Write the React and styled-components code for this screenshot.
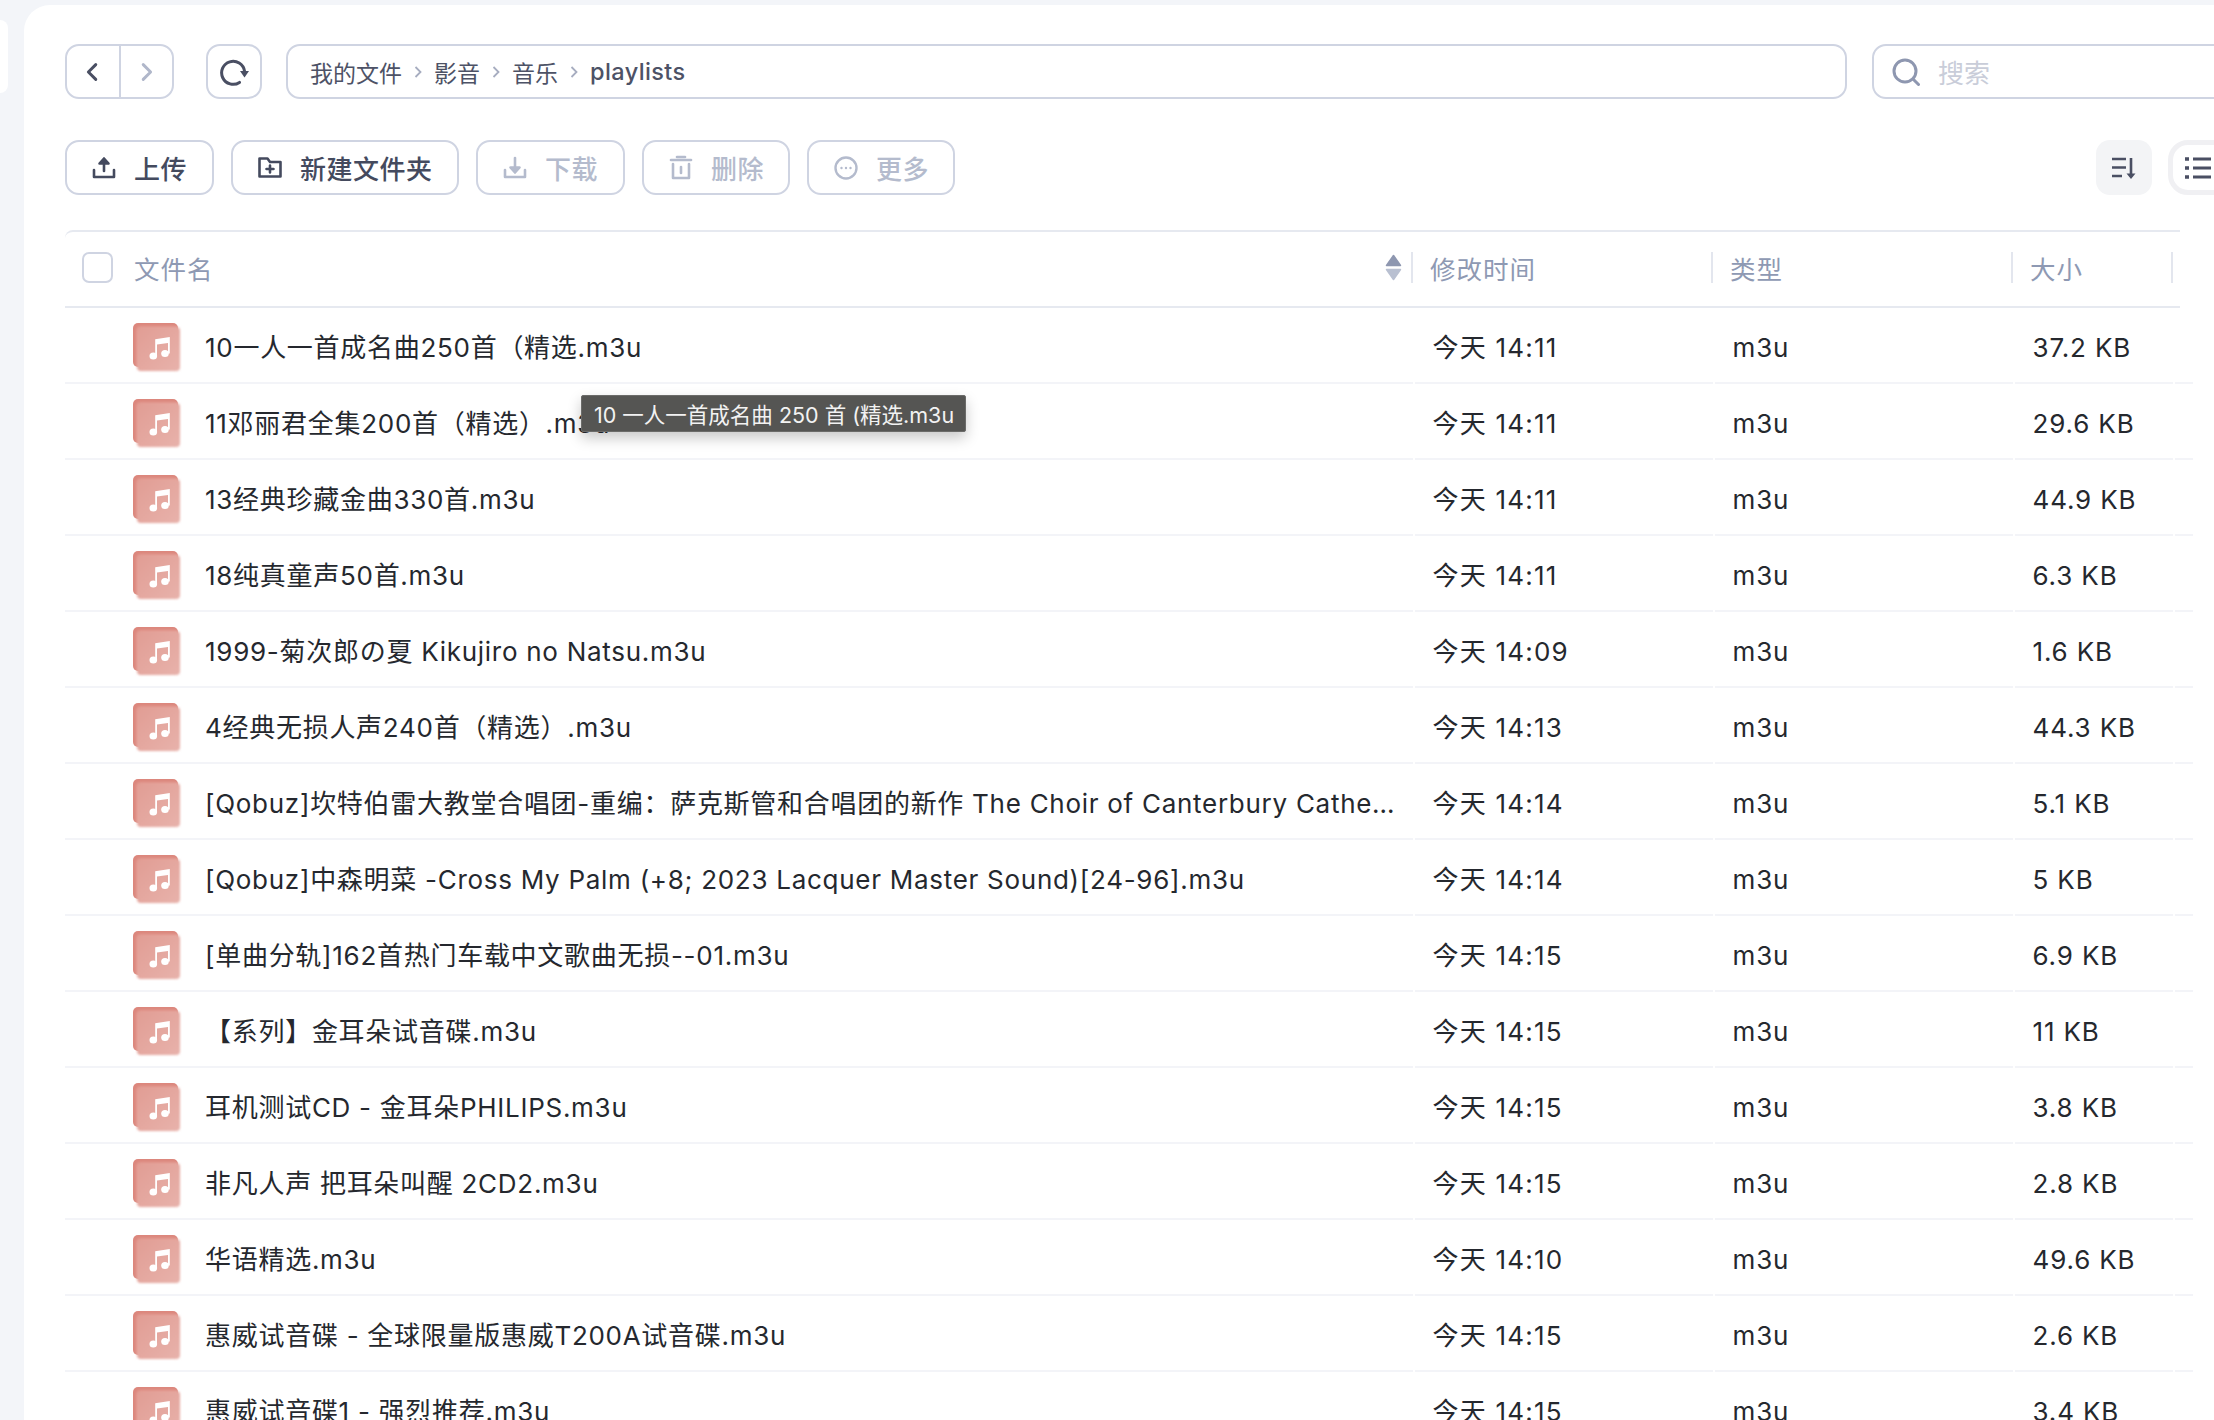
import React from "react";
import styled, { createGlobalStyle } from "styled-components";

const Global = createGlobalStyle`
  html, body { margin: 0; padding: 0; height: 100%; overflow: hidden; background: #f3f5f9; }
  body { font-family: Inter, "Noto Sans CJK SC", sans-serif; color: #25282e; }
  * { box-sizing: border-box; }
`;

const Page = styled.div`
  display: flex;
  align-items: flex-start;
  width: 2214px;
  height: 1420px;
  overflow: hidden;
`;
const SideStub = styled.div`
  flex: none;
  width: 8px;
  height: 73px;
  margin-top: 20px;
  background: #fff;
  border-radius: 0 10px 10px 0;
`;
const Panel = styled.main`
  flex: none;
  width: 2400px;
  height: 1415px;
  margin: 5px 0 0 16px;
  padding: 39px 0 0 41px;
  background: #fff;
  border-radius: 26px 0 0 0;
  overflow: hidden;
`;
const TopBar = styled.div`
  display: flex;
  align-items: stretch;
  height: 55px;
`;
const NavGroup = styled.div`
  display: flex;
  width: 109px;
  border: 2px solid #cfd4e2;
  border-radius: 14px;
`;
const NavButton = styled.button`
  flex: 1;
  display: flex;
  align-items: center;
  justify-content: center;
  padding: 0;
  background: none;
  border: 0;
  & + & { border-left: 2px solid #cfd4e2; }
  color: ${(p) => (p.$off ? "#b0b7ca" : "#4a4f63")};
`;
const RefreshButton = styled.button`
  width: 56px;
  margin-left: 32px;
  display: flex;
  align-items: center;
  justify-content: center;
  padding: 0;
  background: none;
  border: 2px solid #cfd4e2;
  border-radius: 14px;
  color: #4a4f63;
`;
const Crumbs = styled.nav`
  width: 1561px;
  margin-left: 24px;
  padding-left: 22px;
  display: flex;
  align-items: center;
  gap: 8px;
  border: 2px solid #cfd4e2;
  border-radius: 14px;
  font-size: 23px;
  color: #4d5266;
`;
const CrumbSep = styled.span`
  display: flex;
  color: #a7adc0;
`;
const CrumbCurrent = styled.span`
  font-size: 23.5px;
  font-weight: 500;
  letter-spacing: 0.4px;
`;
const SearchBox = styled.div`
  width: 500px;
  margin-left: 25px;
  padding-left: 18px;
  display: flex;
  align-items: center;
  gap: 18px;
  border: 2px solid #cfd4e2;
  border-radius: 14px;
  color: #8e97b0;
`;
const SearchHint = styled.span`
  font-size: 26px;
  color: #c9cdd9;
`;
const ActionBar = styled.div`
  display: flex;
  align-items: stretch;
  height: 55px;
  margin-top: 41px;
  gap: 17px;
`;
const ActionButton = styled.button`
  width: ${(p) => p.$w}px;
  display: flex;
  align-items: center;
  gap: 17px;
  padding: 0 0 0 24px;
  background: none;
  border: 2px solid #cfd4e2;
  border-radius: 14px;
  font: 500 26px Inter, "Noto Sans CJK SC", sans-serif;
  letter-spacing: 0.5px;
  color: ${(p) => (p.$off ? "#b4bbcd" : "#444a5e")};
`;
const ViewTools = styled.div`
  display: flex;
  gap: 16px;
  margin-left: 1124px;
`;
const SortToggle = styled.button`
  width: 56px;
  display: flex;
  align-items: center;
  justify-content: center;
  padding: 0;
  background: #f3f4f6;
  border: 0;
  border-radius: 14px;
  color: #4a4f63;
`;
const ListToggle = styled.button`
  width: 90px;
  display: flex;
  align-items: center;
  padding: 0 0 0 12px;
  background: #fff;
  border: 5px solid #f0f0f3;
  border-radius: 20px;
  color: #4a4f63;
`;
const Table = styled.section`
  position: relative;
  width: 2115px;
  margin-top: 35px;
  border-top: 2px solid #e6e9f0;
  border-radius: 8px 0 0 0;
`;
const columns = "1348px 298px 298px 158px 5px";
const HeadRow = styled.div`
  display: grid;
  grid-template-columns: ${columns};
  column-gap: 2px;
  height: 76px;
  align-items: start;
  border-bottom: 2px solid #e6e9f0;
`;
const HeadCell = styled.div`
  display: flex;
  align-items: center;
  height: 31px;
  margin-top: 20px;
  padding-left: ${(p) => p.$pad ?? 15}px;
  border-right: 2px solid #e3e6ee;
  font-size: 25.5px;
  letter-spacing: 1px;
  color: #8e99b3;
`;
const Check = styled.span`
  width: 31px;
  height: 31px;
  margin-right: 21px;
  border: 2px solid #cfd4e2;
  border-radius: 7px;
`;
const SortArrows = styled.svg`
  margin-left: auto;
  margin-right: 9px;
`;
const Row = styled.div`
  display: grid;
  grid-template-columns: ${columns};
  column-gap: 2px;
  height: 76px;
`;
const Cell = styled.div`
  display: flex;
  align-items: center;
  padding: 5px 0 0 17.5px;
  border-bottom: 2px solid #f3f4f8;
  font-size: 26px;
  line-height: 36px;
  letter-spacing: ${(p) => p.$ls ?? 0.85}px;
  color: #25282e;
  white-space: nowrap;
`;
const NameCell = styled(Cell)`
  padding-left: 68px;
  gap: 25px;
  min-width: 0;
  letter-spacing: 0.72px;
`;
const NameText = styled.span`
  min-width: 0;
  padding-right: 18px;
  overflow: hidden;
  text-overflow: ellipsis;
`;
const FileIcon = styled.span`
  position: relative;
  flex: none;
  width: 47px;
  height: 48px;
  margin-top: -1px;
`;
const IconBack = styled.span`
  position: absolute;
  left: 0;
  top: 0;
  width: 45px;
  height: 44px;
  background: #dc877d;
  border-radius: 5px;
`;
const IconGlass = styled.span`
  position: absolute;
  left: 4px;
  top: 4px;
  width: 43px;
  height: 44px;
  background: linear-gradient(135deg, #e19d94, #e8b2ab);
  border-radius: 4px;
  box-shadow: 0 0 1.5px rgba(255, 235, 230, 0.9);
  filter: blur(1px);
`;
const IconNote = styled.svg`
  position: absolute;
  left: 16px;
  top: 14px;
`;
const Tooltip = styled.div`
  position: absolute;
  left: 516px;
  top: 163px;
  width: 385px;
  height: 37px;
  display: flex;
  align-items: center;
  padding-left: 12px;
  background: #555553;
  border: 1px solid #6b6b69;
  border-radius: 2px;
  box-shadow: 0 6px 14px rgba(0, 0, 0, 0.22);
  font-size: 21.5px;
  color: #f2f2f2;
  white-space: nowrap;
`;

const Line = ({ size = 24, children, sw = 2.6 }) => (
  <svg width={size} height={size} viewBox="0 0 26 26" fill="none" stroke="currentColor" strokeWidth={sw} strokeLinecap="round" strokeLinejoin="round">
    {children}
  </svg>
);

const rows = [
  ["10一人一首成名曲250首（精选.m3u", "14:11", "37.2 KB"],
  ["11邓丽君全集200首（精选）.m3u", "14:11", "29.6 KB"],
  ["13经典珍藏金曲330首.m3u", "14:11", "44.9 KB"],
  ["18纯真童声50首.m3u", "14:11", "6.3 KB"],
  ["1999-菊次郎の夏 Kikujiro no Natsu.m3u", "14:09", "1.6 KB"],
  ["4经典无损人声240首（精选）.m3u", "14:13", "44.3 KB"],
  ["[Qobuz]坎特伯雷大教堂合唱团-重编：萨克斯管和合唱团的新作 The Choir of Canterbury Cathedral.m3u", "14:14", "5.1 KB"],
  ["[Qobuz]中森明菜 -Cross My Palm (+8; 2023 Lacquer Master Sound)[24-96].m3u", "14:14", "5 KB"],
  ["[单曲分轨]162首热门车载中文歌曲无损--01.m3u", "14:15", "6.9 KB"],
  ["【系列】金耳朵试音碟.m3u", "14:15", "11 KB"],
  ["耳机测试CD - 金耳朵PHILIPS.m3u", "14:15", "3.8 KB"],
  ["非凡人声 把耳朵叫醒 2CD2.m3u", "14:15", "2.8 KB"],
  ["华语精选.m3u", "14:10", "49.6 KB"],
  ["惠威试音碟 - 全球限量版惠威T200A试音碟.m3u", "14:15", "2.6 KB"],
  ["惠威试音碟1 - 强烈推荐.m3u", "14:15", "3.4 KB"],
];

const Chevron = ({ left }) => (
  <Line size={24} sw={3.2}>
    <path d={left ? "M16 5l-8 8 8 8" : "M10 5l8 8-8 8"} />
  </Line>
);
const Sep = () => (
  <CrumbSep>
    <svg width="16" height="16" viewBox="0 0 16 16" fill="none" stroke="currentColor" strokeWidth="1.8">
      <path d="M5.500 3l5 5-5 5" />
    </svg>
  </CrumbSep>
);

export default function App() {
  return (
    <Page>
      <Global />
      <SideStub />
      <Panel>
        <TopBar>
          <NavGroup>
            <NavButton aria-label="后退"><Chevron left /></NavButton>
            <NavButton $off aria-label="前进"><Chevron /></NavButton>
          </NavGroup>
          <RefreshButton aria-label="刷新">
            <svg width="30" height="28" viewBox="0 0 30 28" fill="none">
              <path d="M20.500 24.400A11.500 11.500 0 1 1 25.500 13" stroke="currentColor" strokeWidth="3" strokeLinecap="round" />
              <path d="M21 13h9l-4.500 6.500z" fill="currentColor" />
            </svg>
          </RefreshButton>
          <Crumbs>
            <span>我的文件</span>
            <Sep />
            <span>影音</span>
            <Sep />
            <span>音乐</span>
            <Sep />
            <CrumbCurrent>playlists</CrumbCurrent>
          </Crumbs>
          <SearchBox>
            <svg width="28" height="28" viewBox="0 0 28 28" fill="none" stroke="currentColor" strokeWidth="3" strokeLinecap="round">
              <circle cx="13" cy="13" r="11" />
              <path d="M21.500 21.500l5 5" />
            </svg>
            <SearchHint>搜索</SearchHint>
          </SearchBox>
        </TopBar>

        <ActionBar>
          <ActionButton $w={149}>
            <Line size={26}>
              <path d="M3 15v7h20v-7" />
              <path d="M13 16V5" />
              <path d="M8.500 8.500L13 3.500l4.500 5z" fill="currentColor" />
            </Line>
            上传
          </ActionButton>
          <ActionButton $w={228}>
            <Line size={26}>
              <path d="M2.500 21.500V3.500h8l2.500 3.500h10.500v14.500z" />
              <path d="M13 10.500v7M9.500 14h7" />
            </Line>
            新建文件夹
          </ActionButton>
          <ActionButton $off $w={149}>
            <Line size={26}>
              <path d="M3 15v7h20v-7" />
              <path d="M13 3v11" />
              <path d="M8.500 12.500L13 17.500l4.500-5z" fill="currentColor" />
            </Line>
            下载
          </ActionButton>
          <ActionButton $off $w={148}>
            <Line size={26}>
              <path d="M3 5h20" />
              <path d="M9 2h8" />
              <path d="M5 9v14h16V9" />
              <path d="M13 12v6" />
            </Line>
            删除
          </ActionButton>
          <ActionButton $off $w={148}>
            <Line size={26} sw={2.4}>
              <circle cx="13" cy="13" r="10.500" />
              <path d="M8.500 13h.01M13 13h.01M17.500 13h.01" />
            </Line>
            更多
          </ActionButton>
          <ViewTools>
            <SortToggle aria-label="排序">
              <svg width="26" height="26" viewBox="0 0 26 26" fill="none" stroke="currentColor" strokeWidth="2.600">
                <path d="M1 4h14M1 12.500h14M1 21h10" />
                <path d="M20 3v19" />
                <path d="M15.500 18.500h9L20 24z" fill="currentColor" stroke="none" />
              </svg>
            </SortToggle>
            <ListToggle aria-label="列表">
              <svg width="28" height="26" viewBox="0 0 28 26" fill="none" stroke="currentColor" strokeWidth="2.800">
                <path d="M8 4h18M8 13h18M8 22h18" />
                <path d="M0 4h4M0 13h4M0 22h4" strokeWidth="3.600" />
              </svg>
            </ListToggle>
          </ViewTools>
        </ActionBar>

        <Table>
          <HeadRow>
            <HeadCell $pad={17}>
              <Check />
              文件名
              <SortArrows width="17" height="27" viewBox="0 0 17 27">
                <path d="M8.500 1.500L15.500 11.500H1.500z" fill="#8e97b0" stroke="#8e97b0" strokeWidth="1.500" strokeLinejoin="round" />
                <path d="M8.500 25.500L15.500 15.500H1.500z" fill="#b9c0d1" stroke="#b9c0d1" strokeWidth="1.500" strokeLinejoin="round" />
              </SortArrows>
            </HeadCell>
            <HeadCell>修改时间</HeadCell>
            <HeadCell>类型</HeadCell>
            <HeadCell>大小</HeadCell>
          </HeadRow>
          {rows.map(([name, time, size]) => (
            <Row key={name}>
              <NameCell>
                <FileIcon>
                  <IconBack />
                  <IconGlass />
                  <IconNote width="21" height="23" viewBox="0 0 21 23" fill="#fff">
                    <ellipse cx="4.300" cy="19" rx="3.800" ry="3.600" />
                    <ellipse cx="16" cy="16.500" rx="3.800" ry="3.600" />
                    <path d="M6.200 19H8V7.500l11-1.600V16.500h1.800V0L6.200 2.200z" />
                  </IconNote>
                </FileIcon>
                <NameText>{name}</NameText>
              </NameCell>
              <Cell $ls={1.2}>今天 {time}</Cell>
              <Cell>m3u</Cell>
              <Cell>{size}</Cell>
              <Cell />
            </Row>
          ))}
          <Tooltip>10 一人一首成名曲 250 首 (精选.m3u</Tooltip>
        </Table>
      </Panel>
    </Page>
  );
}
